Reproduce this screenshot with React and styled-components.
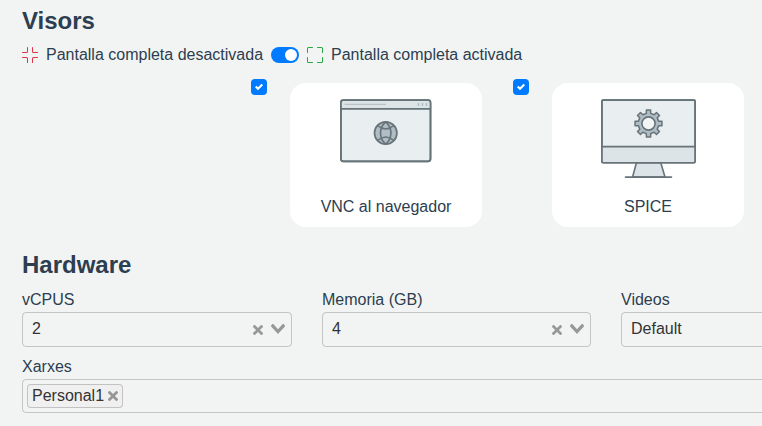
import React from "react";
import styled, { createGlobalStyle } from "styled-components";
import { BsFullscreen, BsFullscreenExit } from "react-icons/bs";

const GlobalStyle = createGlobalStyle`
  *, *::before, *::after { box-sizing: border-box; }
  body {
    margin: 0;
    background: #f2f4f3;
    color: #2c3e50;
    font-family: "Liberation Sans", Arial, sans-serif;
    font-size: 16px;
    line-height: 24px;
    overflow: hidden;
  }
`;

const Page = styled.main`
  width: 762px;
  height: 426px;
  padding: 6px 0 0 22px;
  overflow: hidden;
`;

const Heading = styled.h4`
  margin: 0;
  font-size: 24px;
  line-height: 29px;
  font-weight: 700;
`;

const ToggleRow = styled.div`
  display: flex;
  align-items: center;
  height: 24px;
  margin-top: 8px;
  white-space: nowrap;
`;

const IconSlot = styled.span`
  display: flex;
  margin-right: 8px;
  color: ${(p) => p.$color};
`;

const Switch = styled.span`
  display: flex;
  justify-content: flex-end;
  width: 28px;
  height: 16px;
  margin: 0 8px;
  padding: 2px;
  border-radius: 8px;
  background: #007bff;
`;

const Knob = styled.span`
  width: 12px;
  height: 12px;
  border-radius: 50%;
  background: #fff;
`;

const Viewers = styled.div`
  display: flex;
  gap: 31px;
  margin: 12px 0 0 229px;
`;

const Viewer = styled.div`
  display: flex;
  flex: none;
  gap: 23px;
`;

const Checkbox = styled.span`
  display: flex;
  align-items: center;
  justify-content: center;
  width: 16px;
  height: 16px;
  border-radius: 4px;
  background: #007bff;
`;

const Card = styled.div`
  display: flex;
  flex-direction: column;
  align-items: center;
  width: 192px;
  height: 144px;
  margin-top: 4px;
  border-radius: 16px;
  background: #fff;
`;

const Artwork = styled.div`
  display: flex;
  height: 112px;
`;

const Section = styled.section`
  margin-top: 23px;
`;

const Fields = styled.div`
  display: grid;
  grid-template-columns: 270px 269px 270px;
  column-gap: 30px;
  margin-top: 8px;
`;

const Field = styled.div`
  display: flex;
  flex-direction: column;
  width: ${(p) => p.$width || "auto"};
  margin-top: ${(p) => p.$top || 0};
`;

const Label = styled.label`
  height: 25px;
  line-height: 25px;
`;

const SelectBox = styled.div`
  display: flex;
  align-items: center;
  height: ${(p) => p.$height || "35px"};
  padding: 0 6px 0 ${(p) => (p.$tags ? "4px" : "9px")};
  border: 1px solid rgba(60, 60, 60, 0.26);
  border-radius: 4px;
  color: #333;
`;

const Value = styled.span`
  flex: 1;
  height: 24px;
  margin-top: -1px;
`;

const Actions = styled.span`
  display: flex;
  align-items: flex-end;
  gap: 8px;
  height: 11px;
`;

const Tag = styled.span`
  display: flex;
  align-items: center;
  height: 24px;
  padding: 0 4px;
  gap: 4px;
  border: 1px solid rgba(60, 60, 60, 0.26);
  border-radius: 4px;
  background: #f0f0f0;
  line-height: 22px;
`;

const ClearSvg = styled.svg`
  fill: rgba(60, 60, 60, 0.5);
`;

const ArrowSvg = styled.svg`
  align-self: flex-start;
  fill: rgba(60, 60, 60, 0.5);
`;

const Clear = () => (
  <ClearSvg width="10" height="10">
    <path d="M6.895455 5l2.842897-2.842898c.348864-.348863.348864-.914488 0-1.263636L9.106534.261648c-.348864-.348864-.914489-.348864-1.263636 0L5 3.104545 2.157102.261648c-.348863-.348864-.914488-.348864-1.263636 0L.261648.893466c-.348864.348864-.348864.914489 0 1.263636L3.104545 5 .261648 7.842898c-.348864.348863-.348864.914488 0 1.263636l.631818.631818c.348864.348864.914773.348864 1.263636 0L5 6.895455l2.842898 2.842897c.348863.348864.914772.348864 1.263636 0l.631818-.631818c.348864-.348864.348864-.914489 0-1.263636L6.895455 5z" />
  </ClearSvg>
);

const Arrow = () => (
  <ArrowSvg width="14" height="10">
    <path d="M9.211364 7.59931l4.48338-4.867229c.407008-.441854.407008-1.158247 0-1.60046l-.73712-.80023c-.407008-.441854-1.066904-.441854-1.474243 0L7 5.198617 2.51662.33139c-.407008-.441853-1.066904-.441853-1.474243 0l-.737121.80023c-.407008.441854-.407008 1.158248 0 1.600461l4.48338 4.867228L7 10l2.211364-2.40069z" />
  </ArrowSvg>
);

const Check = () => (
  <Checkbox>
    <svg width="8" height="8" viewBox="0 0 8 8">
      <path fill="#fff" d="M6.564.75l-3.59 3.612-1.538-1.55L0 4.26l2.974 2.99L8 2.193z" />
    </svg>
  </Checkbox>
);

const BrowserArt = () => (
  <svg width="192" height="112" fill="none" stroke="#667378" strokeWidth="1.7">
    <rect x="50.9" y="17.2" width="89.6" height="61.1" rx="2.5" fill="#e9eef1" />
    <path d="M51.5 25.7V19.3q0-1.5 1.5-1.5h85.5q1.5 0 1.5 1.5v6.4z" fill="#dde4e8" stroke="none" />
    <rect x="50.9" y="17.2" width="89.6" height="61.1" rx="2.5" />
    <path d="M51 25.8h89.4" />
    <path d="M54.5 21.4H96" stroke="#b8c3c8" strokeWidth="1.3" />
    <path d="M128.5 19.9v3M132.5 19.9v3M136.5 19.9v3" stroke="#b0bbc1" strokeWidth="1.4" />
    <circle cx="95.7" cy="50" r="11.2" fill="#b0bdc4" />
    <path d="M95.7 38.8q-5.2 4.4-5.2 11.2t5.2 11.2q5.2-4.4 5.2-11.2t-5.2-11.2M87.5 42.5q8.2 7 16.4 0M87.5 57.5q8.2-7 16.4 0" strokeWidth="1.6" />
  </svg>
);

const gearPoints = Array.from({ length: 8 }, (_, i) => {
  const point = (radius, degrees) => {
    const angle = ((i * 45 + degrees) * Math.PI) / 180;
    return `${(96.5 + radius * Math.sin(angle)).toFixed(2)},${(40.5 - radius * Math.cos(angle)).toFixed(2)}`;
  };
  return [point(10.4, -12), point(13.6, -9), point(13.6, 9), point(10.4, 12)].join(" ");
}).join(" ");

const MonitorArt = () => (
  <svg width="192" height="112" fill="none" stroke="#667378" strokeWidth="1.6">
    <path d="M84.5 79.5h24.2l4.3 14.5H80.6z" fill="#dce4e7" />
    <path d="M73.5 94.1h46" strokeLinecap="round" />
    <rect x="49.9" y="17.1" width="93.2" height="62.7" rx="1.2" fill="#e9eef1" />
    <path d="M50.5 64h92v15h-92z" fill="#dce4e7" stroke="none" />
    <rect x="49.9" y="17.1" width="93.2" height="62.7" rx="1.2" />
    <path d="M49.9 63.6h93.2" />
    <polygon points={gearPoints} fill="#b0bdc4" strokeLinejoin="round" strokeWidth="1.5" />
    <circle cx="96.5" cy="40.5" r="6.6" fill="#f2f5f6" strokeWidth="1.6" />
  </svg>
);

const viewers = [
  { name: "VNC al navegador", Art: BrowserArt },
  { name: "SPICE", Art: MonitorArt },
];

const hardware = [
  { label: "vCPUS", value: "2" },
  { label: "Memoria (GB)", value: "4" },
  { label: "Videos", value: "Default" },
];

export default function App() {
  return (
    <Page>
      <GlobalStyle />
      <Heading>Visors</Heading>
      <ToggleRow>
        <IconSlot $color="#dc3545"><BsFullscreenExit size={16} /></IconSlot>
        Pantalla completa desactivada
        <Switch><Knob /></Switch>
        <IconSlot $color="#28a745"><BsFullscreen size={16} /></IconSlot>
        Pantalla completa activada
      </ToggleRow>
      <Viewers>
        {viewers.map(({ name, Art }) => (
          <Viewer key={name}>
            <Check />
            <Card>
              <Artwork><Art /></Artwork>
              {name}
            </Card>
          </Viewer>
        ))}
      </Viewers>
      <Section>
        <Heading>Hardware</Heading>
        <Fields>
          {hardware.map(({ label, value }) => (
            <Field key={label}>
              <Label>{label}</Label>
              <SelectBox>
                <Value>{value}</Value>
                <Actions><Clear /><Arrow /></Actions>
              </SelectBox>
            </Field>
          ))}
        </Fields>
        <Field $width="869px" $top="7px">
          <Label>Xarxes</Label>
          <SelectBox $tags $height="34px">
            <Tag>Personal1<Clear /></Tag>
          </SelectBox>
        </Field>
      </Section>
    </Page>
  );
}
